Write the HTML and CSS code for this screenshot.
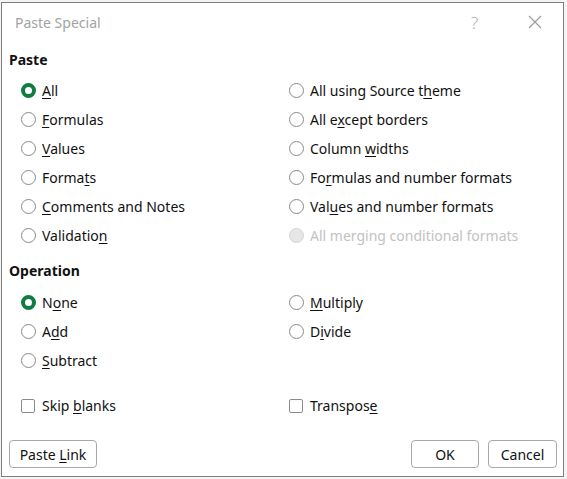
FILE: index.html
```html
<!DOCTYPE html>
<html lang="en">
<head>
<meta charset="utf-8">
<title>Paste Special</title>
<link rel="stylesheet" href="styles.css">
</head>
<body>
<div class="dialog">
  <div class="titlebar">
    <span class="title">Paste Special</span>
    <span class="help">?</span>
    <span class="close">
      <svg width="14" height="14" viewBox="0 0 14 14"><path d="M1 1 L13 13 M13 1 L1 13" stroke="#9a9a9a" stroke-width="1.1" fill="none"/></svg>
    </span>
  </div>
  <div class="body">
    <div class="heading">Paste</div>
    <div class="grid six">
      <label class="opt"><span class="radio on"></span><span><u>A</u>ll</span></label>
      <label class="opt"><span class="radio"></span><span>All using Source t<u>h</u>eme</span></label>
      <label class="opt"><span class="radio"></span><span><u>F</u>ormulas</span></label>
      <label class="opt"><span class="radio"></span><span>All e<u>x</u>cept borders</span></label>
      <label class="opt"><span class="radio"></span><span><u>V</u>alues</span></label>
      <label class="opt"><span class="radio"></span><span>Column <u>w</u>idths</span></label>
      <label class="opt"><span class="radio"></span><span>Forma<u>t</u>s</span></label>
      <label class="opt"><span class="radio"></span><span>Fo<u>r</u>mulas and number formats</span></label>
      <label class="opt"><span class="radio"></span><span><u>C</u>omments and Notes</span></label>
      <label class="opt"><span class="radio"></span><span>Val<u>u</u>es and number formats</span></label>
      <label class="opt"><span class="radio"></span><span>Validatio<u>n</u></span></label>
      <label class="opt disabled"><span class="radio"></span><span>All mer<u>g</u>ing conditional formats</span></label>
    </div>
    <div class="heading op">Operation</div>
    <div class="grid three">
      <label class="opt"><span class="radio on"></span><span>N<u>o</u>ne</span></label>
      <label class="opt"><span class="radio"></span><span><u>M</u>ultiply</span></label>
      <label class="opt"><span class="radio"></span><span>A<u>d</u>d</span></label>
      <label class="opt"><span class="radio"></span><span>D<u>i</u>vide</span></label>
      <label class="opt"><span class="radio"></span><span><u>S</u>ubtract</span></label>
      <span></span>
    </div>
    <div class="grid checks">
      <label class="opt chk"><span class="box"></span><span>Skip <u>b</u>lanks</span></label>
      <label class="opt chk"><span class="box"></span><span>Transpos<u>e</u></span></label>
    </div>
    <div class="buttons">
      <button class="btn link">Paste <u>L</u>ink</button>
      <span class="spacer"></span>
      <button class="btn ok">OK</button>
      <button class="btn cancel">Cancel</button>
    </div>
  </div>
</div>
</body>
</html>
```

FILE: styles.css
```css
* { box-sizing: border-box; }
html, body { margin: 0; padding: 0; }
body {
  background: #f4f4f4;
  font-family: "Noto Sans", "Open Sans", sans-serif;
  font-size: 14px;
  color: #111111;
  width: 567px;
  height: 479px;
  overflow: hidden;
}
.dialog {
  margin: 2px 0 0 1px;
  width: 563px;
  height: 475px;
  background: #ffffff;
  border: 1px solid #7f7f7f;
  display: flex;
  flex-direction: column;
}
.titlebar {
  height: 38px;
  display: flex;
  align-items: center;
  padding-left: 13px;
}
.title {
  color: #a3a3a3;
  font-size: 14px;
  flex: 1;
}
.help {
  color: #acacac;
  font-size: 17px;
  font-weight: 300;
  width: 56px;
}
.close {
  width: 36px;
  display: flex;
  align-items: center;
  padding-left: 1px;
}
.body {
  padding: 9px 6px 8px 7px;
  display: flex;
  flex-direction: column;
}
.heading {
  font-weight: bold;
  height: 20px;
  line-height: 20px;
}
.heading.op { margin-top: 11px; }
.grid {
  display: grid;
  grid-template-columns: 268px 1fr;
  grid-auto-rows: 29px;
}
.six { margin-top: 6px; }
.three { margin-top: 7px; }
.checks { margin-top: 16px; }
.opt {
  display: flex;
  align-items: center;
  gap: 6px;
  padding-left: 12px;
  white-space: nowrap;
}
.opt u { text-underline-offset: 2px; }
.radio {
  width: 15px;
  height: 15px;
  border-radius: 50%;
  border: 1px solid #8a8a8a;
  background: #fff;
  flex: none;
}
.radio.on {
  border: 4px solid #107c41;
}
.disabled { color: #c2c2c2; }
.disabled .radio {
  border-color: #d4d4d4;
  background: #e6e6e6;
}
.chk { padding-left: 12px; gap: 7px; }
.box {
  width: 14px;
  height: 14px;
  border: 1px solid #8a8a8a;
  border-radius: 2px;
  flex: none;
}
.buttons {
  margin-top: 20px;
  display: flex;
  gap: 9px;
}
.spacer { flex: 1; }
.btn {
  height: 28px;
  font-family: inherit;
  font-size: 14px;
  color: #111111;
  background: #fff;
  border: 1px solid #a9a9a9;
  border-radius: 4px;
  padding: 0;
}
.btn u { text-underline-offset: 2px; }
.link { width: 88px; }
.ok { width: 68px; }
.cancel { width: 69px; }
```
